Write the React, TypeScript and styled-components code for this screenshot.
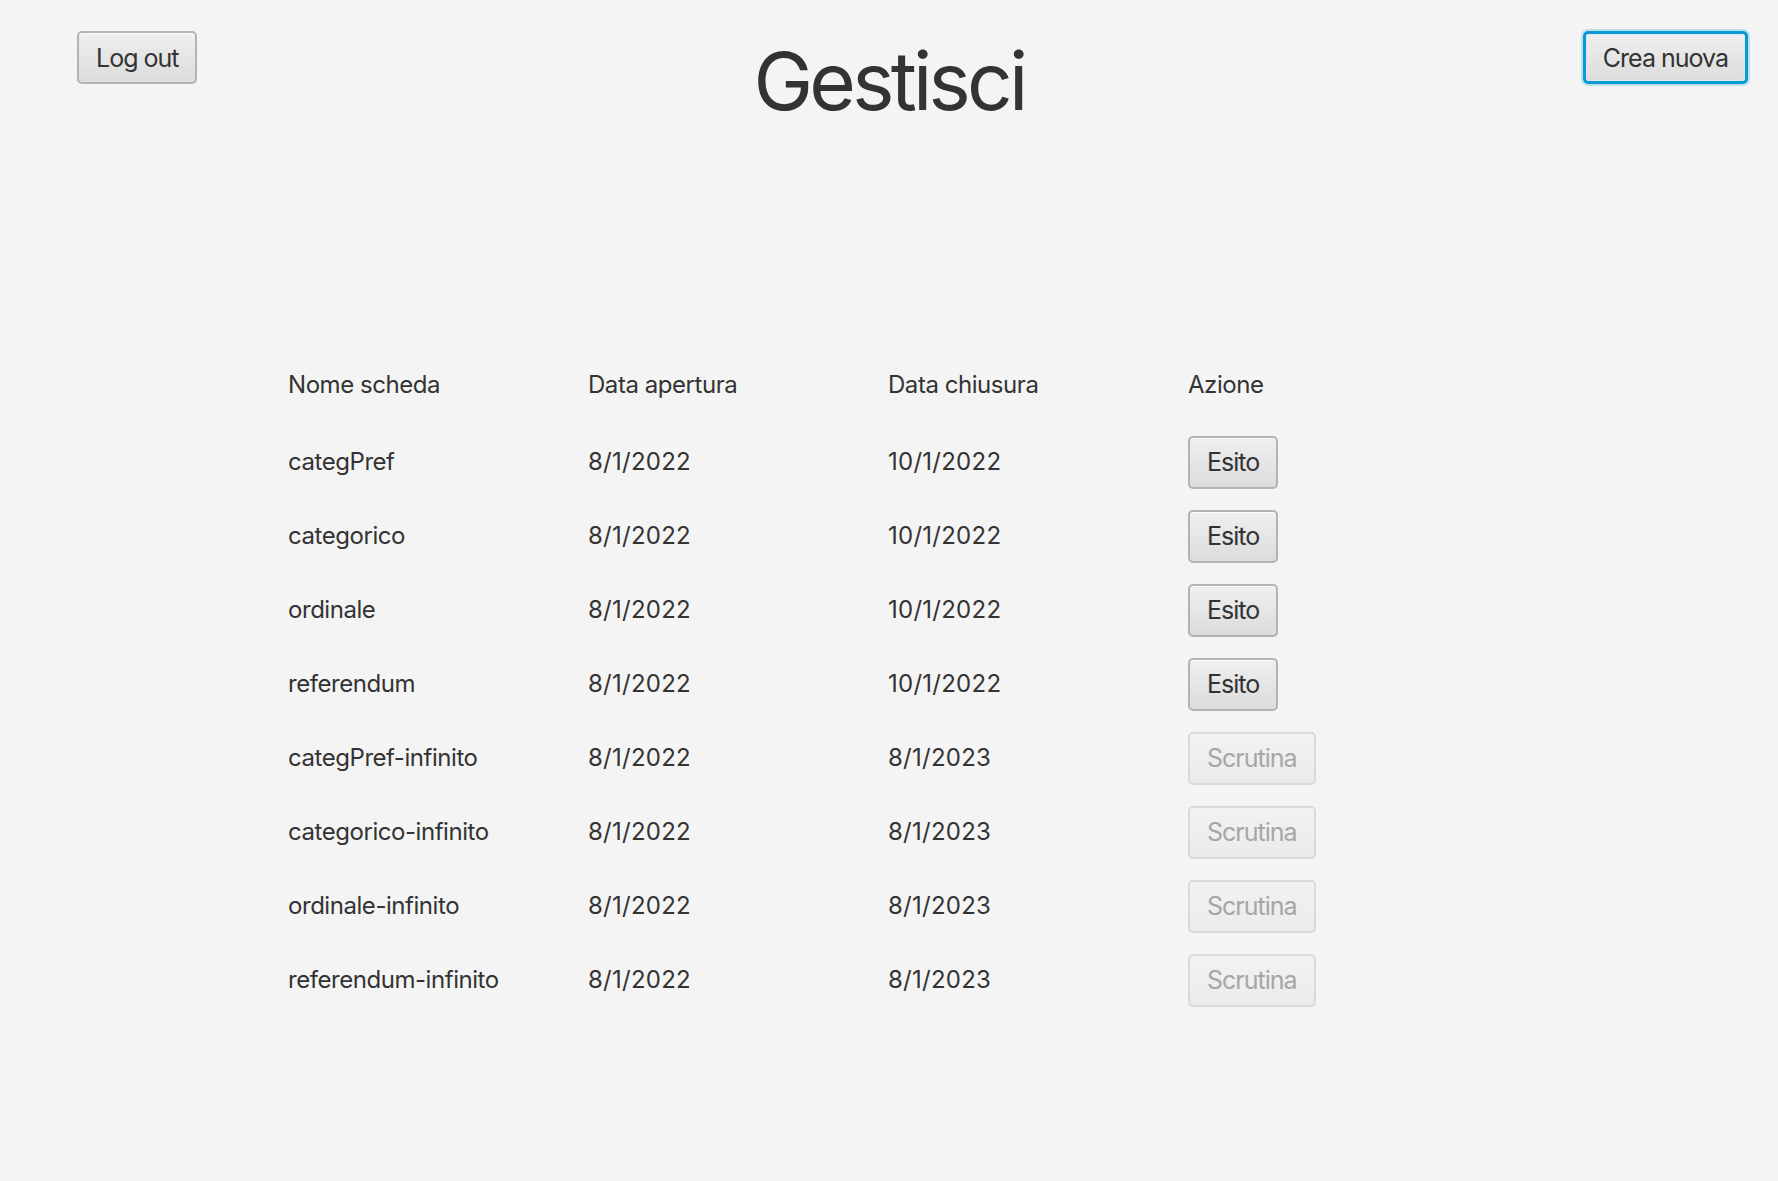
import React from "react";
import styled, { createGlobalStyle, css } from "styled-components";

const GlobalStyle = createGlobalStyle`
  html, body {
    margin: 0;
    padding: 0;
    background: #f4f4f4;
  }
  body {
    font-family: Inter, "Noto Sans", "Liberation Sans", sans-serif;
    color: #333333;
  }
`;

const Page = styled.div`
  width: 1778px;
  height: 1181px;
  background: #f4f4f4;
  overflow: hidden;
`;

const Header = styled.header`
  display: grid;
  grid-template-columns: 1fr auto 1fr;
  align-items: start;
`;

const LeftCell = styled.div`
  display: flex;
  justify-content: flex-start;
  padding: 31px 0 0 77px;
`;

const RightCell = styled.div`
  display: flex;
  justify-content: flex-end;
  padding: 31px 30px 0 0;
`;

const Title = styled.h1`
  margin: 33px 0 0;
  font-size: 80px;
  line-height: 96px;
  font-weight: 400;
  color: #333333;
  letter-spacing: -3.8px;
`;

const Button = styled.button<{ $focused?: boolean; $disabled?: boolean }>`
  box-sizing: border-box;
  height: 53px;
  padding: 0 17px;
  font-family: Inter, "Noto Sans", "Liberation Sans", sans-serif;
  font-size: 25px;
  letter-spacing: -1px;
  color: #333333;
  background: linear-gradient(#efefef, #dcdcdc);
  border: 2px solid #b3b3b3;
  border-radius: 5px;
  box-shadow: inset 0 1px 0 rgba(255, 255, 255, 0.8);
  cursor: pointer;
  ${(p) =>
    p.$focused &&
    css`
      border: 3px solid #0a9ad3;
      box-shadow: 0 0 0 2px rgba(3, 158, 211, 0.22), inset 0 0 0 1px #dfe9ee;
    `}
  ${(p) =>
    p.$disabled &&
    css`
      color: #a6a6a6;
      background: linear-gradient(#f2f2f2, #ebebeb);
      border-color: #dadada;
      box-shadow: none;
      cursor: default;
    `}
`;

const Table = styled.div`
  margin: 219px 0 0 288px;
  display: grid;
  grid-template-columns: 300px 300px 300px auto;
  grid-template-rows: 77px;
  grid-auto-rows: 74px;
  align-items: center;
  font-size: 24px;
  letter-spacing: -0.45px;
  color: #333333;
`;

const HeaderCell = styled.div`
  align-self: start;
  line-height: 74px;
`;

const Cell = styled.div<{ $date?: boolean }>`
  line-height: 30px;
  ${(p) =>
    p.$date &&
    css`
      letter-spacing: 0.25px;
    `}
`;

const ActionCell = styled.div`
  display: flex;
`;

type Row = { name: string; open: string; close: string; action: "Esito" | "Scrutina" };

const rows: Row[] = [
  { name: "categPref", open: "8/1/2022", close: "10/1/2022", action: "Esito" },
  { name: "categorico", open: "8/1/2022", close: "10/1/2022", action: "Esito" },
  { name: "ordinale", open: "8/1/2022", close: "10/1/2022", action: "Esito" },
  { name: "referendum", open: "8/1/2022", close: "10/1/2022", action: "Esito" },
  { name: "categPref-infinito", open: "8/1/2022", close: "8/1/2023", action: "Scrutina" },
  { name: "categorico-infinito", open: "8/1/2022", close: "8/1/2023", action: "Scrutina" },
  { name: "ordinale-infinito", open: "8/1/2022", close: "8/1/2023", action: "Scrutina" },
  { name: "referendum-infinito", open: "8/1/2022", close: "8/1/2023", action: "Scrutina" },
];

export default function App() {
  return (
    <Page>
      <GlobalStyle />
      <Header>
        <LeftCell>
          <Button>Log out</Button>
        </LeftCell>
        <Title>Gestisci</Title>
        <RightCell>
          <Button $focused>Crea nuova</Button>
        </RightCell>
      </Header>
      <Table>
        <HeaderCell>Nome scheda</HeaderCell>
        <HeaderCell>Data apertura</HeaderCell>
        <HeaderCell>Data chiusura</HeaderCell>
        <HeaderCell>Azione</HeaderCell>
        {rows.map((r) => (
          <React.Fragment key={r.name}>
            <Cell>{r.name}</Cell>
            <Cell $date>{r.open}</Cell>
            <Cell $date>{r.close}</Cell>
            <ActionCell>
              <Button $disabled={r.action === "Scrutina"} disabled={r.action === "Scrutina"}>
                {r.action}
              </Button>
            </ActionCell>
          </React.Fragment>
        ))}
      </Table>
    </Page>
  );
}
